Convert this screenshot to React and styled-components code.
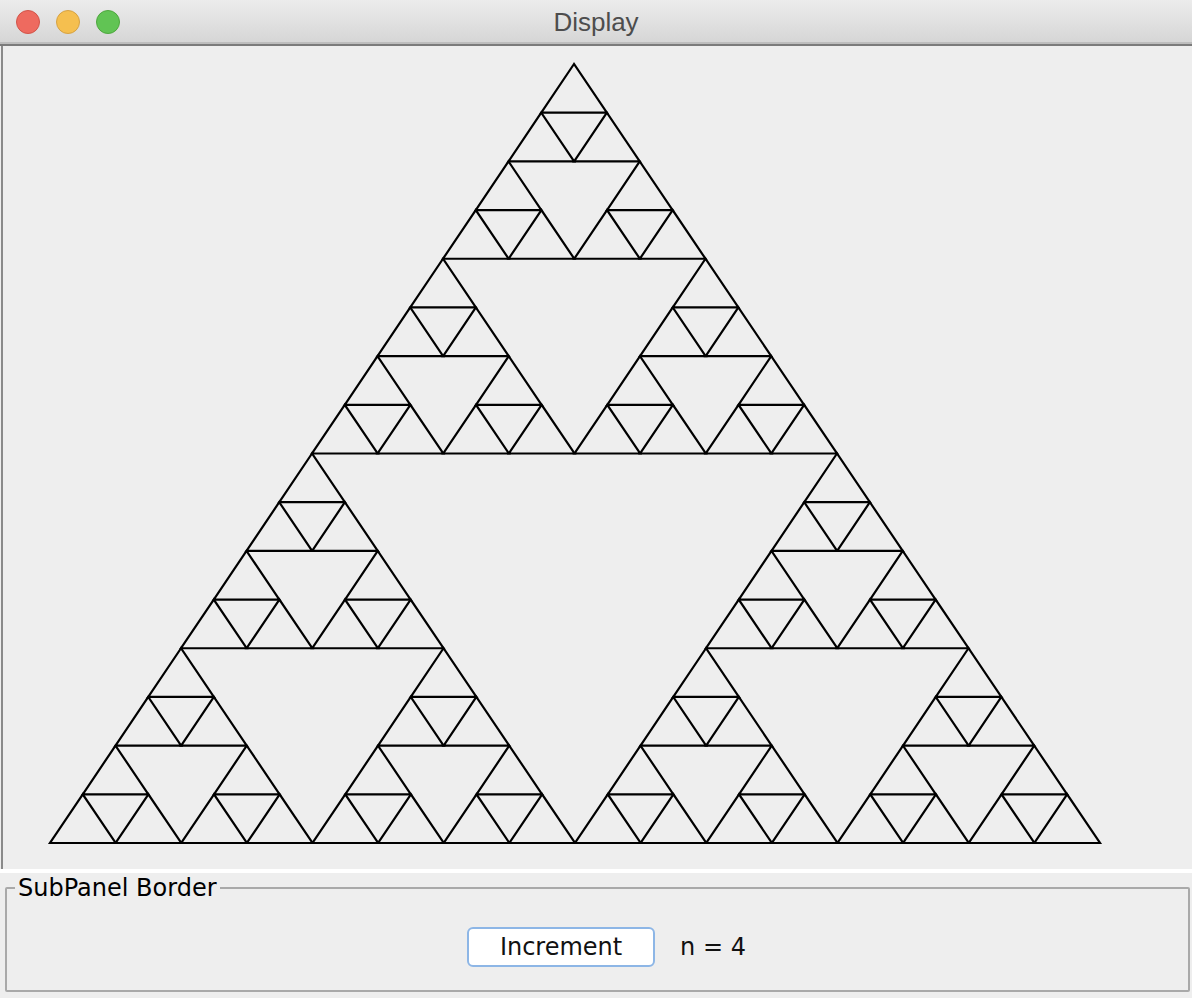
import React from 'react';
import styled, { createGlobalStyle } from 'styled-components';

const GlobalStyle = createGlobalStyle`
  html, body {
    margin: 0;
    padding: 0;
    background: #eeeeee;
  }
`;

const Window = styled.div`
  width: 1192px;
  height: 998px;
  display: flex;
  flex-direction: column;
  background: #eeeeee;
  overflow: hidden;
`;

const TitleBar = styled.div`
  position: relative;
  height: 42px;
  flex-shrink: 0;
  display: flex;
  align-items: center;
  justify-content: center;
  background: linear-gradient(#ececec, #d6d6d6);
  border-bottom: 2px solid #bdbdbd;
  box-shadow: 0 2px 0 #7b7b7b;
  margin-bottom: 2px;
`;

const Lights = styled.div`
  position: absolute;
  left: 16px;
  top: 10px;
  display: flex;
  gap: 16px;
`;

const Light = styled.span`
  width: 24px;
  height: 24px;
  border-radius: 50%;
  box-sizing: border-box;
  background: ${(p) => p.$fill};
  border: 1px solid ${(p) => p.$edge};
`;

const Title = styled.div`
  font-family: "Liberation Sans", Arial, sans-serif;
  font-size: 26px;
  color: #4d4d4d;
  margin-top: 2px;
`;

const Canvas = styled.div`
  height: 823px;
  flex-shrink: 0;
  border-left: 2px solid #8a8a8a;
  margin-left: 1px;
  background: #eeeeee;
`;

const Divider = styled.div`
  height: 4px;
  flex-shrink: 0;
  background: #ffffff;
`;

const SubPanel = styled.div`
  flex: 1;
  padding: 3px 2px 6px 5px;
  display: flex;
`;

const Group = styled.fieldset`
  flex: 1;
  margin: 0;
  padding: 0;
  border: 2px solid #a9a9a9;
  border-radius: 2px;
  min-width: 0;
  display: flex;
  align-items: center;
  justify-content: center;
`;

const Legend = styled.legend`
  font-family: "DejaVu Sans", Verdana, sans-serif;
  font-size: 24px;
  line-height: 24px;
  color: #000;
  padding: 0 3px;
  margin-left: 8px;
`;

const Row = styled.div`
  display: flex;
  align-items: center;
  gap: 25px;
  margin-top: 4px;
  margin-left: 18px;
`;

const Button = styled.button`
  width: 188px;
  height: 40px;
  box-sizing: border-box;
  background: #ffffff;
  border: 2px solid #8db6e6;
  border-radius: 6px;
  font-family: "DejaVu Sans", Verdana, sans-serif;
  font-size: 24px;
  color: #111;
  padding: 0;
  cursor: pointer;
`;

const Label = styled.span`
  font-family: "DejaVu Sans", Verdana, sans-serif;
  font-size: 24px;
  color: #111;
`;

// smallest triangles of the sierpinski set, depth n
function sierpinski(ax, ay, bx, by, cx, cy, n, out) {
  if (n === 0) {
    out.push([ax, ay, bx, by, cx, cy]);
    return;
  }
  const abx = (ax + bx) / 2, aby = (ay + by) / 2;
  const bcx = (bx + cx) / 2, bcy = (by + cy) / 2;
  const cax = (cx + ax) / 2, cay = (cy + ay) / 2;
  sierpinski(ax, ay, abx, aby, cax, cay, n - 1, out);
  sierpinski(abx, aby, bx, by, bcx, bcy, n - 1, out);
  sierpinski(cax, cay, bcx, bcy, cx, cy, n - 1, out);
}

function Triangle({ n }) {
  const tris = [];
  sierpinski(574, 64, 50, 843, 1100, 843, n, tris);
  return (
    <svg width="1189" height="823" viewBox="3 46 1189 823" style={{ display: 'block' }}>
      {tris.map((t, i) => (
        <polygon
          key={i}
          points={`${t[0]},${t[1]} ${t[2]},${t[3]} ${t[4]},${t[5]}`}
          fill="none"
          stroke="#000"
          strokeWidth="2.2"
          strokeLinejoin="miter"
        />
      ))}
    </svg>
  );
}

export default function App() {
  const [n, setN] = React.useState(4);
  return (
    <>
      <GlobalStyle />
      <Window>
        <TitleBar>
          <Lights>
            <Light $fill="#ee6a5f" $edge="#d25449" />
            <Light $fill="#f5bf4f" $edge="#d6a243" />
            <Light $fill="#61c454" $edge="#4ea73e" />
          </Lights>
          <Title>Display</Title>
        </TitleBar>
        <Canvas>
          <Triangle n={n} />
        </Canvas>
        <Divider />
        <SubPanel>
          <Group>
            <Legend>SubPanel Border</Legend>
            <Row>
              <Button onClick={() => setN(n + 1)}>Increment</Button>
              <Label>n = {n}</Label>
            </Row>
          </Group>
        </SubPanel>
      </Window>
    </>
  );
}
